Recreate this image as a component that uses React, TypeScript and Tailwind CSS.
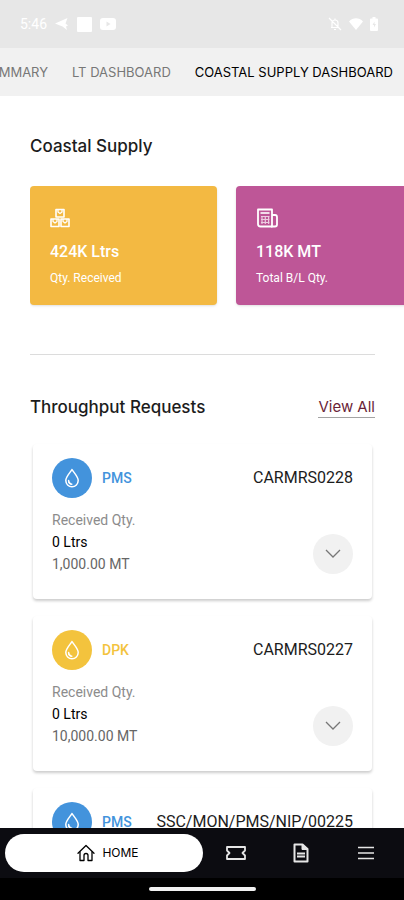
import type { ReactNode } from "react";
import clsx from "clsx";

type IconProps = { className?: string };

const tabs = [
  { label: "SUMMARY", active: false },
  { label: "LT DASHBOARD", active: false },
  { label: "COASTAL SUPPLY DASHBOARD", active: true },
];

const requests = [
  { id: "CARMRS0228", product: "PMS", litres: "0 Ltrs", tonnes: "1,000.00 MT" },
  { id: "CARMRS0227", product: "DPK", litres: "0 Ltrs", tonnes: "10,000.00 MT" },
  { id: "SSC/MON/PMS/NIP/00225", product: "PMS", litres: "0 Ltrs", tonnes: "5,000.00 MT" },
];

function BoxesIcon({ className }: IconProps) {
  return (
    <svg viewBox="0 0 20 20" fill="none" stroke="currentColor" strokeWidth="1.6" strokeLinejoin="round" className={className}>
      <path d="M6 1.5h8v7.500H6zM1 11h8v7.5H1zM11 11h8v7.5h-8z" />
      <path d="M8 1.5v2.500l2 1.500 2-1.500V1.500M3 11v2.500l2 1.500 2-1.500V11M13 11v2.500l2 1.500 2-1.500V11" strokeWidth="1.3" />
    </svg>
  );
}

function PumpIcon({ className }: IconProps) {
  return (
    <svg viewBox="0 0 22 20" fill="none" stroke="currentColor" strokeWidth="1.8" strokeLinejoin="round" className={className}>
      <path d="M2 1.5h14v17H4.5a2.5 2.5 0 0 1-2.5-2.5z" />
      <path d="M16 7h3a2 2 0 0 1 2 2v7.5a2 2 0 0 1-2 2h-4" />
      <path d="M4.5 5h9" strokeWidth="1.6" />
      <path d="M5 8.5h8.5M5 11.5h8.5M5 14.5h8.5M6 8v8M9.3 8v8M12.6 8v8" strokeWidth="1.2" opacity=".7" />
    </svg>
  );
}

function DropIcon({ className }: IconProps) {
  return (
    <svg viewBox="0 0 16 20" fill="none" stroke="currentColor" strokeWidth="1.5" strokeLinejoin="round" strokeLinecap="round" className={className}>
      <path d="M8 1.5C6 5 1.8 8.6 1.8 12.6a6.2 6.2 0 0 0 12.4 0C14.2 8.6 10 5 8 1.5z" />
      <path d="M4.6 12.6c0 2 1.3 3.4 3.2 3.6" />
      <path d="M5 14.5l1.5 1.2" />
    </svg>
  );
}

function ChevronIcon({ className }: IconProps) {
  return (
    <svg viewBox="0 0 16 10" fill="none" stroke="currentColor" strokeWidth="1.3" className={className}>
      <path d="M1 1l7 7 7-7" />
    </svg>
  );
}

function HomeIcon({ className }: IconProps) {
  return (
    <svg viewBox="0 0 18 18" fill="none" stroke="currentColor" strokeWidth="1.3" strokeLinejoin="round" strokeLinecap="round" className={className}>
      <path d="M1 9.2L9 1.5l8 7.7" />
      <path d="M3 8v8.5h4v-5a2 2 0 0 1 4 0v5h4V8" />
    </svg>
  );
}

function TicketIcon({ className }: IconProps) {
  return (
    <svg viewBox="0 0 20 14" fill="none" stroke="currentColor" strokeWidth="1.8" strokeLinejoin="round" className={className}>
      <path d="M1 1h18v3.5L16.5 7 19 9.5V13H1V9.5L3.5 7 1 4.5z" />
    </svg>
  );
}

function DocumentIcon({ className }: IconProps) {
  return (
    <svg viewBox="0 0 16 20" fill="none" stroke="currentColor" strokeWidth="2" strokeLinejoin="round" className={className}>
      <path d="M1.5 1.5h8L14.5 6v12.5h-13z" />
      <path d="M9 1.5V6.5h5.5z" fill="currentColor" strokeWidth="1" />
      <path d="M4 10.5h8M4 13.5h8" />
    </svg>
  );
}

function MenuIcon({ className }: IconProps) {
  return (
    <svg viewBox="0 0 16 14" fill="none" stroke="currentColor" strokeWidth="1.6" className={className}>
      <path d="M0 1.5h16M0 7h16M0 12.5h16" />
    </svg>
  );
}

function StatusBar() {
  return (
    <div className="flex h-12 shrink-0 items-center justify-between bg-[#e7e7e7] pr-[26px] pl-5 text-white">
      <div className="flex items-center gap-2">
        <span className="font-[Roboto] text-sm leading-4">5:46</span>
        <svg viewBox="0 0 14 14" fill="currentColor" className="size-3.5">
          <path d="M0 6.5L12.5 1l-2 5.5L13 8.5l-2 1 1 3.5-4.5-3.5z" />
        </svg>
        <svg viewBox="0 0 15 15" fill="currentColor" className="size-[15px]">
          <rect width="15" height="15" rx="1" />
        </svg>
        <svg viewBox="0 0 16 12" className="h-3 w-4">
          <rect width="16" height="12" rx="3" fill="currentColor" />
          <path d="M6.5 3.5v5l4-2.5z" fill="#e7e7e7" />
        </svg>
      </div>
      <div className="flex items-center gap-[7px]">
        <svg viewBox="0 0 14 14" fill="none" stroke="currentColor" strokeWidth="1.2" className="size-3.5">
          <path d="M1 1l12 12M3 10.5h8M4 10V6a3 3 0 0 1 6 0v4M7 3V1.5M6 12.5h2" />
        </svg>
        <svg viewBox="0 0 14 12" fill="currentColor" className="h-3 w-3.5">
          <path d="M0 3.5C4-.8 10-.8 14 3.5L7 12z" />
        </svg>
        <svg viewBox="0 0 8 14" className="h-3.5 w-2">
          <path d="M2.5 0h3v1.5H7q1 0 1 1V13q0 1-1 1H1q-1 0-1-1V2.5q0-1 1-1h1.5z" fill="currentColor" />
          <path d="M4.5 4.5L2.5 8h1.5v2.5l2-3.5H4.5z" fill="#e7e7e7" />
        </svg>
      </div>
    </div>
  );
}

function StatCard({ icon, value, label, className }: { icon: ReactNode; value: string; label: string; className: string }) {
  return (
    <div className={clsx("flex h-[119px] w-[187px] shrink-0 flex-col rounded px-5 pt-[22px] font-[Roboto] text-white shadow", className)}>
      {icon}
      <p className="mt-3.5 text-base leading-5 font-medium">{value}</p>
      <p className="mt-2 text-xs leading-4">{label}</p>
    </div>
  );
}

function RequestCard({ request }: { request: (typeof requests)[number] }) {
  const isPms = request.product === "PMS";
  return (
    <article className="rounded bg-white px-[19px] pt-3.5 pb-6 font-[Roboto] shadow-[0_2px_3px_rgba(0,0,0,0.2)]">
      <div className="flex items-center">
        <span className={clsx("flex size-10 items-center justify-center rounded-full text-white", isPms ? "bg-[#4393dc]" : "bg-[#f3c33d]")}>
          <DropIcon className="h-5 w-4" />
        </span>
        <span className={clsx("ml-2.5 text-sm font-medium", isPms ? "text-[#4393dc]" : "text-[#f3c33d]")}>{request.product}</span>
        <span className="ml-auto text-base text-[#1c1c1c]">{request.id}</span>
      </div>
      <div className="mt-[11px] flex items-end justify-between text-sm leading-[22px]">
        <div>
          <p className="text-[#8c8c8c]">Received Qty.</p>
          <p className="text-black">{request.litres}</p>
          <p className="text-[#666666]">{request.tonnes}</p>
        </div>
        <button type="button" aria-label="Expand" className="mb-px flex size-10 items-center justify-center rounded-full bg-[#f1f1f1] text-[#777777]">
          <ChevronIcon className="h-2.5 w-4" />
        </button>
      </div>
    </article>
  );
}

export default function App() {
  return (
    <div className="flex h-screen flex-col overflow-hidden bg-white">
      <StatusBar />

      {/* Scrolled to the last tab */}
      <nav className="flex h-12 shrink-0 items-center justify-end gap-6 overflow-hidden bg-[#f1f1f1] pt-0.5 pr-[11px] font-[Inter] text-[13px] whitespace-nowrap">
        {tabs.map((tab) => (
          <a key={tab.label} href="#" className={tab.active ? "text-black" : "text-[#777777]"}>
            {tab.label}
          </a>
        ))}
      </nav>

      <main className="min-h-0 flex-1 overflow-hidden pt-10 pr-[29px] pl-[30px]">
        <h2 className="font-[Inter] text-[17px] leading-5 font-medium text-[#1c1c1c]">Coastal Supply</h2>
        <div className="-mr-[29px] mt-[30px] flex gap-[19px] overflow-hidden pb-2">
          <StatCard icon={<BoxesIcon className="size-5" />} value="424K Ltrs" label="Qty. Received" className="bg-[#f3b942]" />
          <StatCard icon={<PumpIcon className="h-5 w-[22px]" />} value="118K MT" label="Total B/L Qty." className="bg-[#be5697]" />
        </div>

        <hr className="mt-[41px] border-[#dcdcdc]" />

        <div className="mt-10 flex items-center justify-between font-[Inter] font-medium">
          <h2 className="text-[17px] leading-6 text-[#1c1c1c]">Throughput Requests</h2>
          <a href="#" className="border-b border-[#a3a3a3] text-[15px] leading-5 font-normal text-[#6b1f38]">
            View All
          </a>
        </div>
        <div className="mt-[25px] flex flex-col gap-[17px] px-[3px]">
          {requests.map((request) => (
            <RequestCard key={request.id} request={request} />
          ))}
        </div>
      </main>

      <footer className="shrink-0 bg-black">
        <nav className="flex h-[50px] items-center bg-[#0c0c11] pr-1.5 pl-[5px] text-[#e6e6e6]">
          <a href="#" className="flex h-[38px] w-[198px] items-center justify-center gap-[7px] rounded-full bg-white pl-2 font-[Inter] text-xs text-black">
            <HomeIcon className="size-[18px]" />
            HOME
          </a>
          <div className="flex flex-1">
            <button type="button" aria-label="Tickets" className="flex h-10 flex-1 items-center justify-center">
              <TicketIcon className="h-3.5 w-5" />
            </button>
            <button type="button" aria-label="Documents" className="flex h-10 flex-1 items-center justify-center">
              <DocumentIcon className="h-5 w-4" />
            </button>
            <button type="button" aria-label="Menu" className="flex h-10 flex-1 items-center justify-center">
              <MenuIcon className="h-3.5 w-4" />
            </button>
          </div>
        </nav>
        <div className="flex h-[22px] items-center justify-center">
          <div className="h-1 w-[107px] rounded-full bg-[#f1f1f1]" />
        </div>
      </footer>
    </div>
  );
}
